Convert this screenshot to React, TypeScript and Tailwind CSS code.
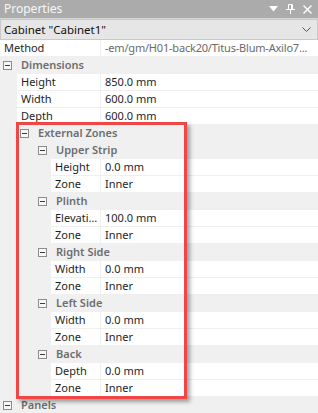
import type { ReactNode } from 'react'

type Row =
  | { kind: 'cat'; depth: 0 | 1 | 2; label: string }
  | { kind: 'prop'; depth: 0 | 1 | 3; label: string; value: string; muted?: boolean }

const rows: Row[] = [
  { kind: 'prop', depth: 0, label: 'Method', value: '-em/gm/H01-back20/Titus-Blum-Axilo7...', muted: true },
  { kind: 'cat', depth: 0, label: 'Dimensions' },
  { kind: 'prop', depth: 1, label: 'Height', value: '850.0 mm' },
  { kind: 'prop', depth: 1, label: 'Width', value: '600.0 mm' },
  { kind: 'prop', depth: 1, label: 'Depth', value: '600.0 mm' },
  { kind: 'cat', depth: 1, label: 'External Zones' },
  { kind: 'cat', depth: 2, label: 'Upper Strip' },
  { kind: 'prop', depth: 3, label: 'Height', value: '0.0 mm' },
  { kind: 'prop', depth: 3, label: 'Zone', value: 'Inner' },
  { kind: 'cat', depth: 2, label: 'Plinth' },
  { kind: 'prop', depth: 3, label: 'Elevation', value: '100.0 mm' },
  { kind: 'prop', depth: 3, label: 'Zone', value: 'Inner' },
  { kind: 'cat', depth: 2, label: 'Right Side' },
  { kind: 'prop', depth: 3, label: 'Width', value: '0.0 mm' },
  { kind: 'prop', depth: 3, label: 'Zone', value: 'Inner' },
  { kind: 'cat', depth: 2, label: 'Left Side' },
  { kind: 'prop', depth: 3, label: 'Width', value: '0.0 mm' },
  { kind: 'prop', depth: 3, label: 'Zone', value: 'Inner' },
  { kind: 'cat', depth: 2, label: 'Back' },
  { kind: 'prop', depth: 3, label: 'Depth', value: '0.0 mm' },
  { kind: 'prop', depth: 3, label: 'Zone', value: 'Inner' },
  { kind: 'cat', depth: 0, label: 'Panels' },
]

const catIndent: Record<number, string> = {
  0: 'pl-[3px]',
  1: 'pl-[20px]',
  2: 'pl-[38px]',
}

const propGutter: Record<number, string> = {
  0: 'w-0',
  1: 'w-[17px]',
  3: 'w-[51px]',
}

function MinusBox() {
  return (
    <span className="flex h-[9px] w-[9px] shrink-0 items-center justify-center border border-[#8c8c8c] bg-[#f7f7f7]">
      <span className="h-px w-[5px] bg-[#3c3c3c]" />
    </span>
  )
}

function Category({ depth, label }: { depth: number; label: string }) {
  return (
    <div className={`flex h-[17px] items-center bg-[#f0f0f0] ${catIndent[depth]}`}>
      <MinusBox />
      <span className="ml-[9px] font-semibold text-[#6d6d6d]">{label}</span>
    </div>
  )
}

function Prop({
  depth,
  label,
  value,
  muted,
}: {
  depth: number
  label: string
  value: string
  muted?: boolean
}) {
  return (
    <div className="flex h-[17px] bg-[#f0f0f0]">
      <div className={`shrink-0 ${propGutter[depth]}`} />
      <div className="flex min-w-0 flex-1 border-b border-[#efefef] bg-white">
        <div className="min-w-0 flex-1 truncate pl-[4px] leading-[16px] text-[#1e1e1e]">{label}</div>
        <div
          className={`w-[218px] shrink-0 truncate border-l border-[#f0f0f0] pl-[4px] leading-[16px] ${
            muted ? 'tracking-[-0.2px] text-[#6a6a6a]' : 'text-[#1e1e1e]'
          }`}
        >
          {value}
        </div>
      </div>
    </div>
  )
}

function TitleButton({ children }: { children: ReactNode }) {
  return <span className="flex h-[17px] w-[17px] items-center justify-center">{children}</span>
}

export default function App() {
  return (
    <div
      className="relative h-[413px] w-[318px] overflow-hidden bg-[#f0f0f0] text-[11px]"
      style={{ fontFamily: '"Noto Sans", "Open Sans", sans-serif' }}
    >
      <div className="flex h-[18px] items-center justify-between bg-[#ababab] pl-[4px] pr-[2px]">
        <span className="text-[12px] text-[#f7f7f7]">Properties</span>
        <div className="flex items-center">
          <TitleButton>
            <svg width="9" height="6" viewBox="0 0 9 6">
              <path d="M0 0h9L4.5 5.5z" fill="#ffffff" />
            </svg>
          </TitleButton>
          <TitleButton>
            <svg width="9" height="10" viewBox="0 0 9 10" fill="none" stroke="#ffffff" strokeWidth="1">
              <path d="M2.5 0.5h4v5h-4z M0 5.5h9 M4.5 5.5v4.5" />
              <path d="M5.5 0.5v5" />
            </svg>
          </TitleButton>
          <TitleButton>
            <svg width="9" height="9" viewBox="0 0 9 9" stroke="#ffffff" strokeWidth="1.4">
              <path d="M0.5 0.5l8 8M8.5 0.5l-8 8" />
            </svg>
          </TitleButton>
        </div>
      </div>
      <div className="h-px bg-[#d6d6d6]" />
      <div className="flex h-[21px] items-center justify-between border border-[#c9c9c9] bg-[#e6e6e6] pl-[3px] pr-[6px]">
        <span className="text-[11.5px] text-[#111111]">Cabinet "Cabinet1"</span>
        <svg width="9" height="5" viewBox="0 0 9 5" fill="none" stroke="#555555" strokeWidth="1">
          <path d="M0.5 0.5l4 4 4-4" />
        </svg>
      </div>

      {rows.map((row, i) =>
        row.kind === 'cat' ? (
          <Category key={i} depth={row.depth} label={row.label} />
        ) : (
          <Prop key={i} depth={row.depth} label={row.label} value={row.value} muted={row.muted} />
        ),
      )}

      <div className="pointer-events-none absolute left-[16px] top-[122px] h-[277px] w-[171px] border-[3px] border-[#f04646] shadow-[3px_3px_4px_rgba(0,0,0,0.35)]" />
    </div>
  )
}
